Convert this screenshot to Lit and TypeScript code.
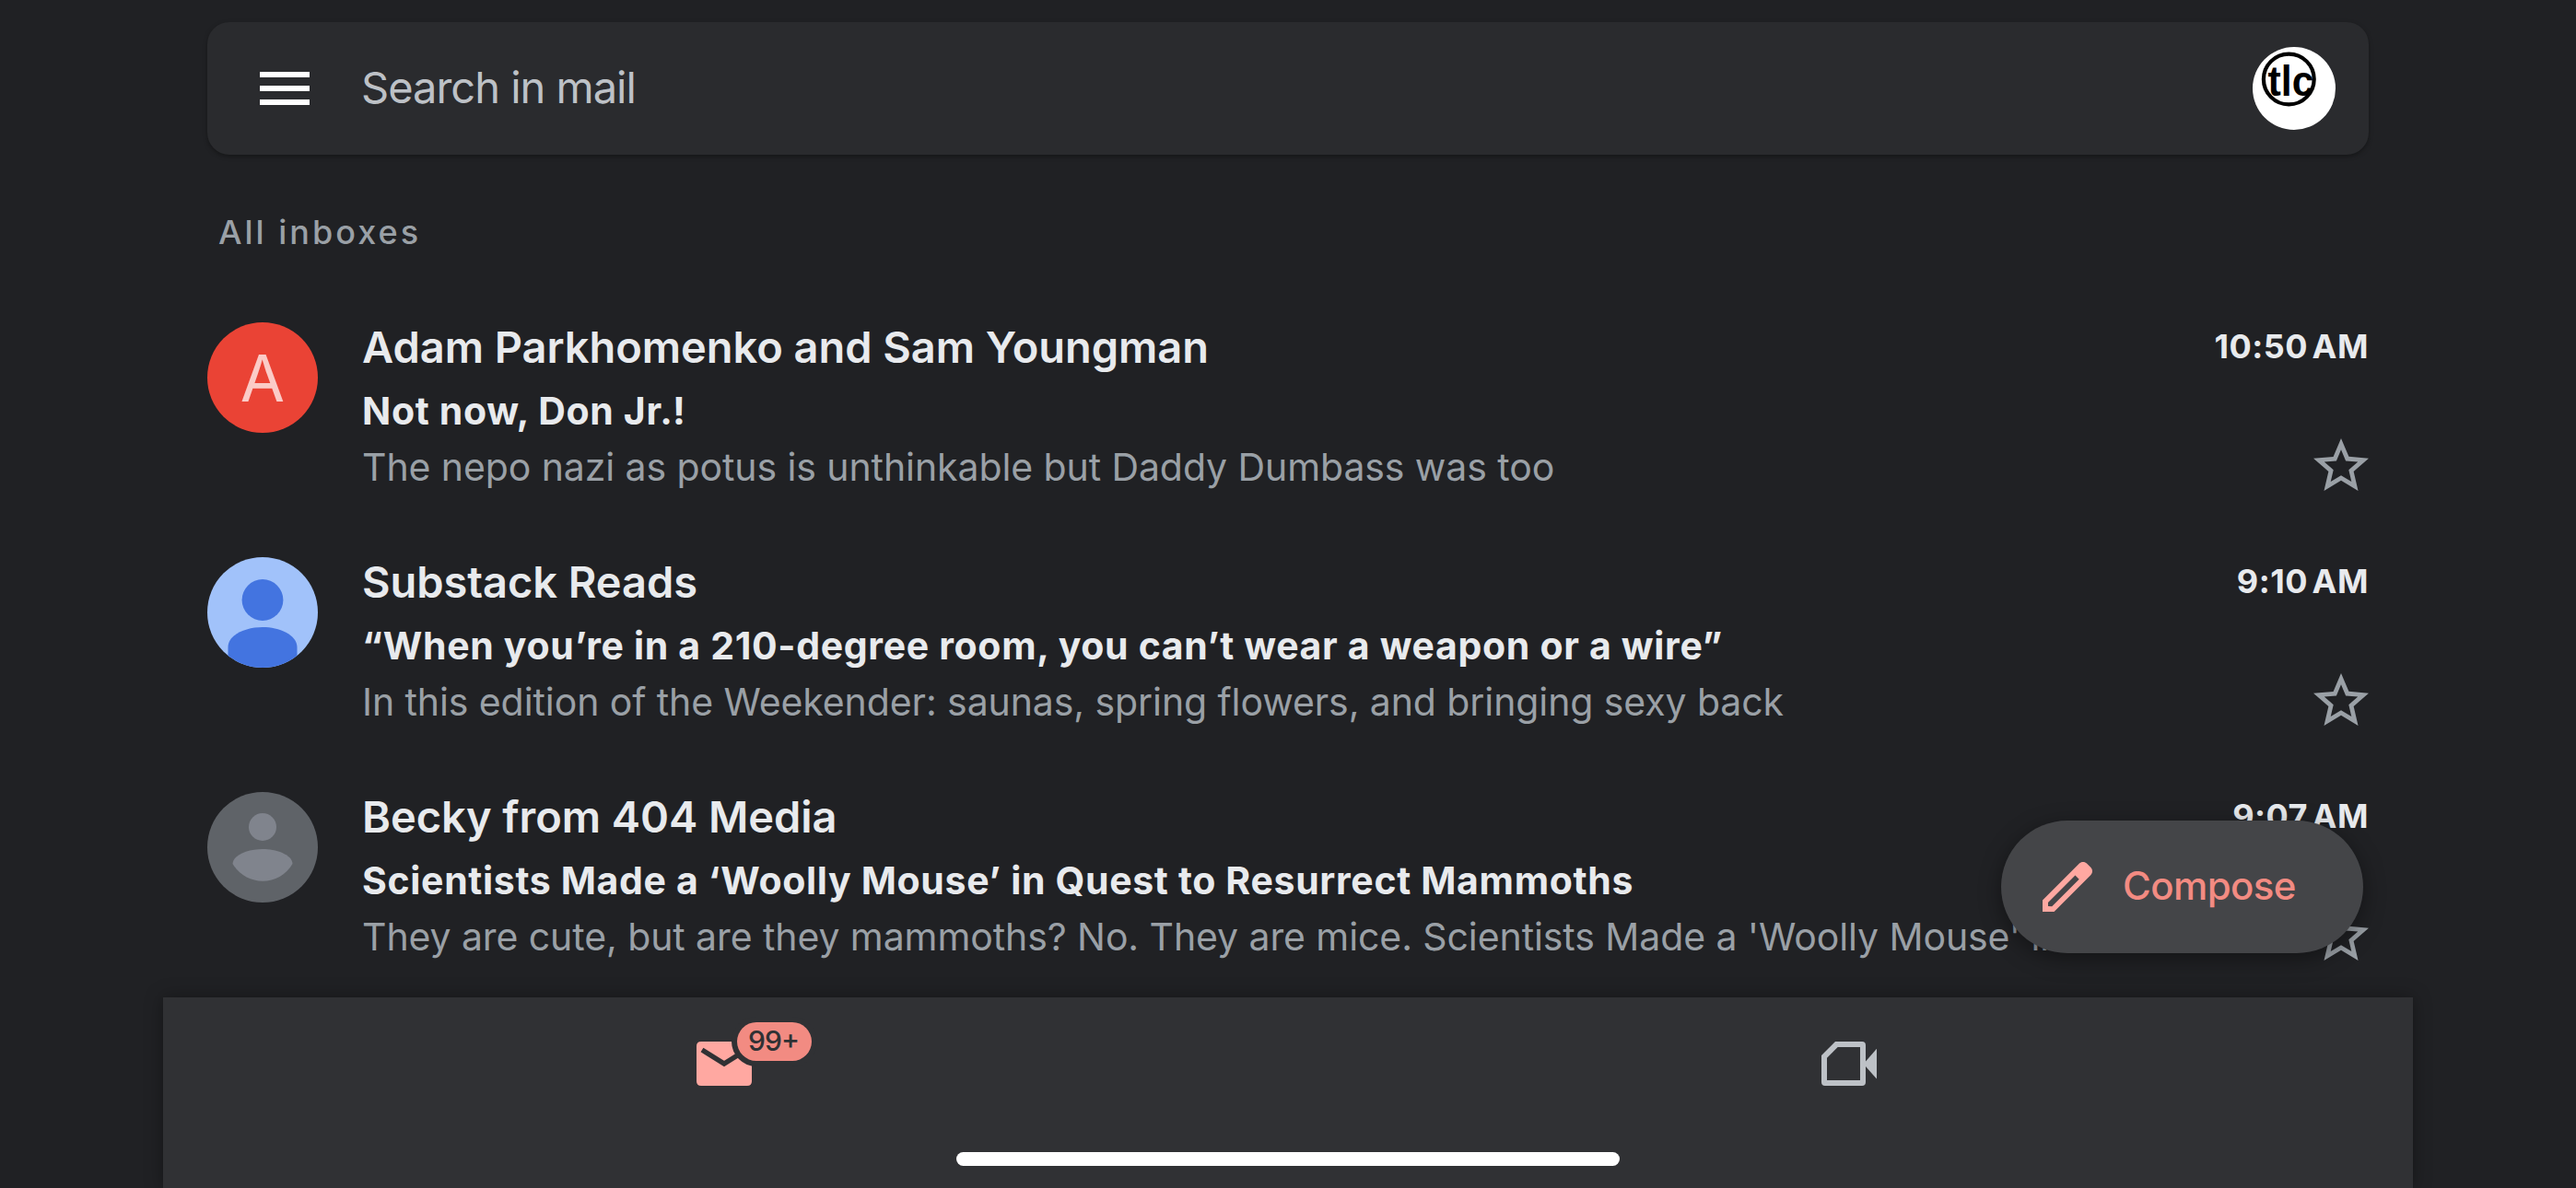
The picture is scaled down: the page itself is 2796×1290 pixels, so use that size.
import { LitElement, html, css, svg, TemplateResult } from "lit";
import { customElement, property } from "lit/decorators.js";

interface Mail {
  avatar: "letter" | "person" | "generic";
  sender: string;
  subject: string;
  snippet: string;
  time: string;
}

const mails: Mail[] = [
  {
    avatar: "letter",
    sender: "Adam Parkhomenko and Sam Youngman",
    subject: "Not now, Don Jr.!",
    snippet: "The nepo nazi as potus is unthinkable but Daddy Dumbass was too",
    time: "10:50 AM",
  },
  {
    avatar: "person",
    sender: "Substack Reads",
    subject: "“When you’re in a 210-degree room, you can’t wear a weapon or a wire”",
    snippet: "In this edition of the Weekender: saunas, spring flowers, and bringing sexy back",
    time: "9:10 AM",
  },
  {
    avatar: "generic",
    sender: "Becky from 404 Media",
    subject: "Scientists Made a ‘Woolly Mouse’ in Quest to Resurrect Mammoths",
    snippet: "They are cute, but are they mammoths? No. They are mice. Scientists Made a 'Woolly Mouse' in Qu…",
    time: "9:07 AM",
  },
];

const avatars: Record<Mail["avatar"], TemplateResult> = {
  letter: svg`
    <circle cx="60" cy="60" r="60" fill="#ea4335" />
    <text x="60" y="86" text-anchor="middle" font-size="70" fill="#fbcbc7">A</text>
  `,
  person: svg`
    <clipPath id="disc"><circle cx="60" cy="60" r="60" /></clipPath>
    <circle cx="60" cy="60" r="60" fill="#a1c2fa" />
    <g clip-path="url(#disc)" fill="#4374e0">
      <circle cx="60" cy="46.5" r="22.4" />
      <path d="M22.5 98c0-14 19.5-22 37.5-22s37.5 8 37.5 22v22h-75z" />
    </g>
  `,
  generic: svg`
    <circle cx="60" cy="60" r="60" fill="#5f6368" />
    <g fill="#80848d">
      <circle cx="60" cy="38" r="15" />
      <path d="M27.5 78C28 67.5 46 62 60 62s32 5.5 32.5 16C85.5 90 73 96.8 60 96.8S34.5 90 27.5 78z" />
    </g>
  `,
};

@customElement("mail-row")
export class MailRow extends LitElement {
  @property({ attribute: false }) mail!: Mail;

  static styles = css`
    :host {
      display: flex;
      height: 255px;
    }
    .avatar {
      flex: none;
      width: 120px;
      height: 120px;
      margin: 7px 48px 0 0;
    }
    .body {
      flex: 1;
      min-width: 0;
      white-space: nowrap;
    }
    .line {
      display: flex;
      justify-content: space-between;
    }
    .sender {
      font-size: 47px;
      font-weight: 600;
      line-height: 68px;
      letter-spacing: -0.05px;
    }
    .time {
      font-size: 36px;
      font-weight: 700;
      line-height: 67px;
      letter-spacing: 0.5px;
      word-spacing: -4.5px;
    }
    .subject {
      font-size: 41px;
      font-weight: 700;
      line-height: 70px;
      letter-spacing: 0.66px;
    }
    .snippet {
      font-size: 41px;
      line-height: 52px;
      letter-spacing: -0.09px;
      color: #9aa0a6;
    }
    .star {
      flex: none;
      width: 72px;
      height: 72px;
      margin: -11px -6px 0 0;
      fill: #9aa0a6;
    }
  `;

  render() {
    return html`
      <svg class="avatar" viewBox="0 0 120 120">${avatars[this.mail.avatar]}</svg>
      <div class="body">
        <div class="line">
          <span class="sender">${this.mail.sender}</span>
          <span class="time">${this.mail.time}</span>
        </div>
        <div class="subject">${this.mail.subject}</div>
        <div class="line">
          <span class="snippet">${this.mail.snippet}</span>
          <svg class="star" viewBox="0 0 24 24">
            <path d="M22 9.24l-7.19-.62L12 2 9.19 8.63 2 9.24l5.46 4.73L5.82 21 12 17.27 18.18 21l-1.63-7.03L22 9.24zM12 15.4l-3.76 2.27 1-4.28-3.32-2.88 4.38-.38L12 6.1l1.71 4.04 4.38.38-3.32 2.88 1 4.28L12 15.4z" />
          </svg>
        </div>
      </div>
    `;
  }
}

@customElement("app-root")
export class AppRoot extends LitElement {
  static styles = css`
    :host {
      display: flex;
      flex-direction: column;
      position: relative;
      height: 1290px;
      overflow: hidden;
      background: #202124;
      color: #e8eaed;
      font-family: Inter, "Liberation Sans", sans-serif;
    }
    main {
      flex: 1;
      min-height: 0;
      padding: 24px 225px 0;
    }
    .search {
      display: flex;
      align-items: center;
      box-sizing: border-box;
      height: 144px;
      padding: 0 36px 0 57px;
      border-radius: 24px;
      background: #2a2b2e;
      box-shadow: 0 2px 5px rgba(0, 0, 0, 0.35);
    }
    .menu {
      width: 54px;
      height: 36px;
      fill: #fff;
    }
    .hint {
      flex: 1;
      margin-left: 56px;
      padding-bottom: 4px;
      font-size: 47px;
      letter-spacing: -1px;
      color: #bdc1c6;
    }
    .profile {
      width: 90px;
      height: 90px;
    }
    .label {
      padding: 60px 12px 67px;
      font-size: 36px;
      font-weight: 500;
      line-height: 48px;
      letter-spacing: 3px;
      color: #9aa0a6;
    }
    nav {
      display: grid;
      grid-template-columns: 1fr 1fr;
      justify-items: center;
      position: relative;
      box-sizing: border-box;
      height: 207px;
      margin: 0 177px;
      padding: 36px 2px 0 0;
      background: #303134;
      box-shadow: 0 0 18px rgba(0, 0, 0, 0.35);
    }
    .tab {
      width: 144px;
      height: 72px;
      overflow: visible;
    }
    .home {
      position: absolute;
      left: 861px;
      bottom: 24px;
      width: 720px;
      height: 15px;
      border-radius: 8px;
      background: #fff;
    }
    .compose {
      display: flex;
      align-items: center;
      position: absolute;
      right: 231px;
      top: 891px;
      box-sizing: border-box;
      width: 393px;
      height: 144px;
      padding-left: 36px;
      border-radius: 72px;
      background: #444548;
      box-shadow: 0 6px 24px rgba(0, 0, 0, 0.4);
      font-size: 42px;
      font-weight: 500;
      letter-spacing: -0.6px;
      color: #f28b82;
    }
    .pencil {
      width: 72px;
      height: 72px;
      margin-right: 24px;
      fill: #ffa8a1;
    }
    .action {
      padding-bottom: 3px;
    }
  `;

  render() {
    return html`
      <main>
        <div class="search">
          <svg class="menu" viewBox="0 0 54 36">
            <path d="M0 0h54v6H0zM0 15h54v6H0zM0 30h54v6H0z" />
          </svg>
          <span class="hint">Search in mail</span>
          <svg class="profile" viewBox="0 0 90 90">
            <circle cx="45" cy="45" r="45" fill="#fff" />
            <circle cx="39.3" cy="35" r="27.4" fill="none" stroke="#000" stroke-width="4.2" />
            <text
              x="16.5"
              y="53"
              font-family="Liberation Sans"
              font-weight="700"
              font-size="46"
              textLength="50"
              lengthAdjust="spacingAndGlyphs"
            >tlc</text>
          </svg>
        </div>
        <div class="label">All inboxes</div>
        ${mails.map((mail) => html`<mail-row .mail=${mail}></mail-row>`)}
      </main>

      <nav>
        <svg class="tab" viewBox="0 0 144 72">
          <path fill="#ffa8a1" d="M46 12h50q5 0 5 5v38q0 5-5 5H46q-5 0-5-5V17q0-5 5-5z" />
          <path d="M47 21l24 15 24-15" fill="none" stroke="#303134" stroke-width="5.4" />
          <rect x="79" y="-15" width="93" height="54" rx="27" fill="#303134" />
          <rect x="85" y="-9" width="81" height="42" rx="21" fill="#f28b82" />
          <text
            x="125"
            y="22"
            text-anchor="middle"
            font-size="30"
            font-weight="500"
            textLength="56"
            fill="#303134"
          >99+</text>
        </svg>
        <svg class="tab" viewBox="0 0 24 24" fill="#bdc1c6">
          <path
            fill-rule="evenodd"
            d="M7 4h9.7Q18 4 18 5.3v5.9L22 6.6v10.9L18 13v5.7Q18 20 16.7 20H3.3Q2 20 2 18.7V9zM7.9 6L4 9.9V18h12V6z"
          />
        </svg>
        <div class="home"></div>
      </nav>

      <div class="compose">
        <svg class="pencil" viewBox="0 0 24 24">
          <path d="M20.41 4.94l-1.35-1.35c-.78-.78-2.05-.78-2.83 0L3 16.82V21h4.18L20.41 7.77c.79-.78.79-2.05 0-2.83zM6.41 19.06L5 19v-1.36l9.82-9.82 1.41 1.41-9.82 9.83z" />
        </svg>
        <span class="action">Compose</span>
      </div>
    `;
  }
}
